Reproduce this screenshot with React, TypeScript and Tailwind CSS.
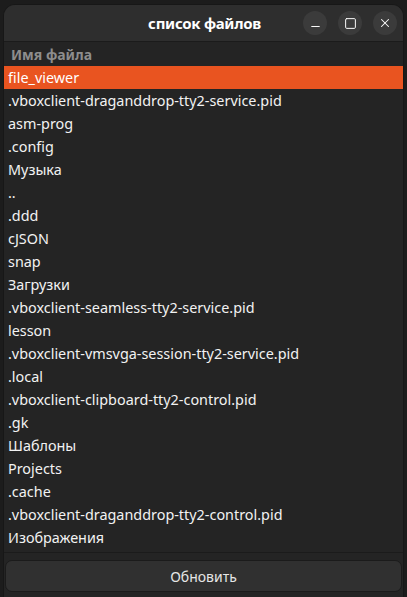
import { Minus, Square, X } from "lucide-react";

const files = [
  "file_viewer",
  ".vboxclient-draganddrop-tty2-service.pid",
  "asm-prog",
  ".config",
  "Музыка",
  "..",
  ".ddd",
  "cJSON",
  "snap",
  "Загрузки",
  ".vboxclient-seamless-tty2-service.pid",
  "lesson",
  ".vboxclient-vmsvga-session-tty2-service.pid",
  ".local",
  ".vboxclient-clipboard-tty2-control.pid",
  ".gk",
  "Шаблоны",
  "Projects",
  ".cache",
  ".vboxclient-draganddrop-tty2-control.pid",
  "Изображения",
];

export default function App() {
  return (
    <div className="w-[407px] h-[597px] overflow-hidden bg-[#1c1c1c] pt-[4px] pl-[3px] font-['Noto_Sans',sans-serif]">
      <div className="w-[401px] h-[600px] rounded-t-[12px] bg-[#242424] border border-[#171717] flex flex-col overflow-hidden">
        <div className="h-[37px] shrink-0 bg-[#2e2e2e] border-b border-[#1b1b1b] flex items-center relative">
          <div className="flex-1 text-center text-white font-bold text-[15px] tracking-[-0.3px] pl-[2px]">список файлов</div>
          <div className="absolute right-[6px] top-[6px] flex gap-[11px]">
            <button className="w-[24px] h-[24px] rounded-full bg-[#3b3b3b] flex items-center justify-center text-white">
              <Minus size={13} strokeWidth={1.8} className="mt-[7px]" />
            </button>
            <button className="w-[24px] h-[24px] rounded-full bg-[#3b3b3b] flex items-center justify-center text-white">
              <Square size={13} strokeWidth={1.8} />
            </button>
            <button className="w-[24px] h-[24px] rounded-full bg-[#3b3b3b] flex items-center justify-center text-white">
              <X size={14} strokeWidth={1.8} />
            </button>
          </div>
        </div>
        <div className="h-[24px] shrink-0 flex items-center pl-[7px] text-[#8d8d8d] font-bold text-[14px]">Имя файла</div>
        <div className="flex flex-col">
          {files.map((f, i) => (
            <div
              key={i}
              className={`h-[23px] flex items-center pl-[4px] text-[14.4px] ${i === 0 ? "bg-[#e95420] text-white" : "text-[#f2f2f2]"}`}
            >
              {f}
            </div>
          ))}
        </div>
        <div className="h-[4px] shrink-0 border-b border-[#1b1b1b]" />
        <div className="px-[1px] pt-[7px]">
          <button className="w-full h-[32px] rounded-[7px] bg-[#303030] border border-[#1b1b1b] text-[#e6e6e6] text-[14px]">Обновить</button>
        </div>
      </div>
    </div>
  );
}
